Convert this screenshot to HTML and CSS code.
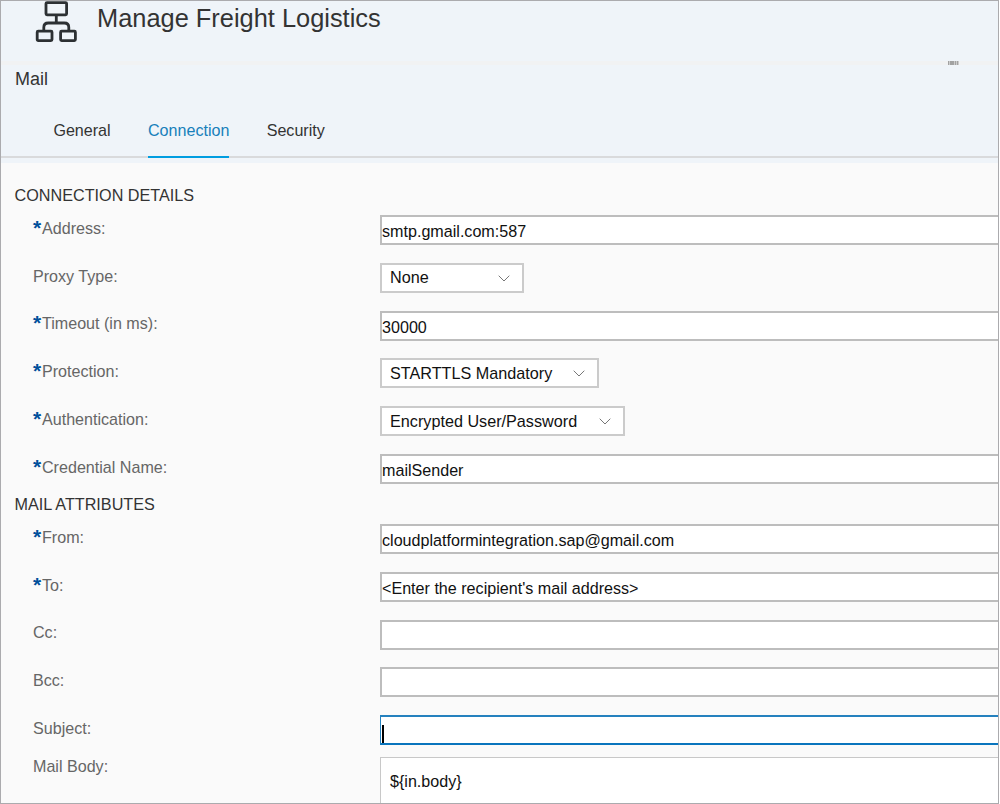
FILE: index.html
```html
<!DOCTYPE html>
<html lang="en">
<head>
<meta charset="utf-8">
<title>Manage Freight Logistics</title>
<link rel="stylesheet" href="styles.css">
</head>
<body>
<div class="frame">
  <header class="title-bar">
    <svg class="flow-icon" viewBox="0 0 42 42" fill="none" stroke="#2c3033" stroke-width="2.8">
      <rect x="11" y="1.6" width="20.6" height="12.2" rx="1"/>
      <path d="M21.300 13.500v8.500M8.800 30v-3.500q0-4.500 4.500-4.500h16q4.500 0 4.500 4.500v3.500"/>
      <rect x="2.200" y="30.200" width="14.800" height="9.400" rx="1"/>
      <rect x="25.600" y="30.200" width="14.800" height="9.400" rx="1"/>
    </svg>
    <h1 class="title">Manage Freight Logistics</h1>
  </header>
  <div class="splitter"><span class="grip"></span></div>
  <section class="panel-head">
    <h2 class="panel-title">Mail</h2>
    <nav class="tabs">
      <a class="tab">General</a>
      <a class="tab tab-active">Connection</a>
      <a class="tab">Security</a>
    </nav>
  </section>
  <main class="form">
    <h3 class="group-title">CONNECTION DETAILS</h3>
    <div class="row"><label class="label required">Address:</label><div class="input">smtp.gmail.com:587</div></div>
    <div class="row"><label class="label">Proxy Type:</label><div class="select select-proxy">None<svg class="chevron" viewBox="0 0 12 7"><path d="M.7.7 6 6 11.300.7"/></svg></div></div>
    <div class="row"><label class="label required">Timeout (in ms):</label><div class="input">30000</div></div>
    <div class="row"><label class="label required">Protection:</label><div class="select select-protection">STARTTLS Mandatory<svg class="chevron" viewBox="0 0 12 7"><path d="M.7.7 6 6 11.300.7"/></svg></div></div>
    <div class="row"><label class="label required">Authentication:</label><div class="select select-auth">Encrypted User/Password<svg class="chevron" viewBox="0 0 12 7"><path d="M.7.7 6 6 11.300.7"/></svg></div></div>
    <div class="row row-last"><label class="label required">Credential Name:</label><div class="input">mailSender</div></div>
    <h3 class="group-title">MAIL ATTRIBUTES</h3>
    <div class="row"><label class="label required">From:</label><div class="input">cloudplatformintegration.sap@gmail.com</div></div>
    <div class="row"><label class="label required">To:</label><div class="input">&lt;Enter the recipient's mail address&gt;</div></div>
    <div class="row"><label class="label">Cc:</label><div class="input"></div></div>
    <div class="row"><label class="label">Bcc:</label><div class="input"></div></div>
    <div class="row row-subject"><label class="label">Subject:</label><div class="input input-focus"><span class="caret"></span></div></div>
    <div class="row row-body"><label class="label">Mail Body:</label><div class="textarea">${in.body}</div></div>
  </main>
</div>
</body>
</html>
```

FILE: styles.css
```css
* { box-sizing: border-box; }
body {
  margin: 0;
  background: #fff;
  font: 16px/20px "Liberation Sans", Arial, sans-serif;
  color: #333;
  overflow: hidden;
}
.frame {
  width: 999px;
  height: 804px;
  display: flex;
  flex-direction: column;
  border: 1px solid #ababae;
  background: #fafafa;
  overflow: hidden;
}
h1, h2, h3 { margin: 0; font-weight: 400; }
.title-bar {
  flex: none;
  display: flex;
  height: 60px;
  padding-left: 34px;
  background: #eff4f9;
}
.flow-icon { width: 42px; height: 42px; }
.title {
  padding: 2px 0 0 20px;
  font-size: 25.4px;
  line-height: 30px;
}
.splitter {
  flex: none;
  display: flex;
  justify-content: flex-end;
  height: 4px;
  padding-right: 39px;
  background: #f1f2f3;
}
.grip {
  width: 11px;
  height: 4px;
  background: repeating-linear-gradient(90deg, #a2a2a2 0 1.4px, #ccc 1.4px 2.2px);
}
.panel-head {
  flex: none;
  height: 98px;
  background: #eff4f9;
}
.panel-title {
  height: 55px;
  padding: 4px 0 0 14px;
  font-size: 18px;
  line-height: 20px;
}
.tabs {
  display: flex;
  gap: 37.3px;
  height: 38px;
  padding-left: 52.4px;
  border-bottom: 2px solid #d9dadc;
}
.tab {
  height: 38px;
  font-size: 16.1px;
  line-height: 20px;
}
.tab-active {
  color: #1780bb;
  border-bottom: 2px solid #009de0;
}
.form {
  display: flex;
  flex-direction: column;
  padding-top: 22.4px;
}
.group-title {
  height: 29.7px;
  padding-left: 13.5px;
  font-size: 16.2px;
  line-height: 20px;
}
.row {
  display: grid;
  grid-template-columns: 347px 1fr;
  align-items: start;
  height: 47.8px;
  padding-left: 32px;
}
.row-last { height: 40.3px; }
.row-subject { height: 41.8px; }
.row-body { height: 60px; }
.label {
  height: 24px;
  padding-top: 2.8px;
  color: #666;
  font-size: 16.1px;
}
.row-body .label { padding-top: 0; margin-top: -0.8px; }
.required::before {
  content: "*";
  display: inline-block;
  width: 9px;
  color: #00509b;
  font-size: 21px;
  font-weight: 700;
  line-height: 16px;
  vertical-align: -1px;
}
.input {
  height: 30px;
  padding-top: 4.3px;
  border: 2px solid #bdbdbd;
  border-right: 0;
  background: #fff;
  color: #111;
  font-size: 16.13px;
}
.input-focus {
  border: 1px solid #2581be;
  border-width: 2px 0 2px 1px;
  border-bottom-color: #0a75bd;
}
.caret {
  display: block;
  width: 2px;
  height: 18px;
  margin: 3px 0 0 1px;
  background: #000;
}
.select {
  display: flex;
  align-items: center;
  justify-content: space-between;
  height: 30px;
  padding: 0 12px 1px 8px;
  border: 2px solid #cbcbcb;
  background: #fff;
  color: #111;
  font-size: 16.2px;
}
.select-proxy { width: 144px; }
.select-protection { width: 219px; }
.select-auth { width: 245px; }
.chevron {
  width: 12px;
  height: 7px;
  margin-top: 2px;
  fill: none;
  stroke: #777;
}
.textarea {
  height: 60px;
  padding: 13.3px 9px;
  border: 1px solid #c8c8c8;
  border-right: 0;
  background: #fff;
  color: #111;
  font-size: 16.1px;
}
```
